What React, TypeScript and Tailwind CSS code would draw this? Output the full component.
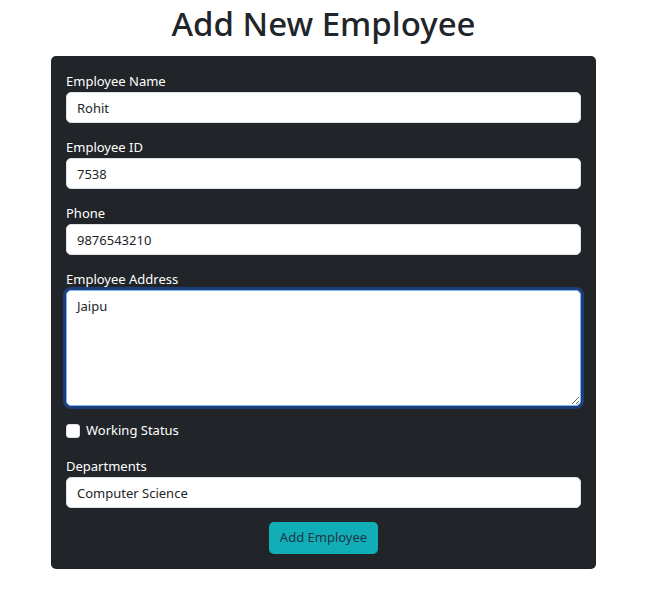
import React, { useState } from 'react';

const font = { fontFamily: '"Noto Sans", "Open Sans", sans-serif' };

const Field: React.FC<{ label: string; value: string; last?: boolean }> = ({ label, value, last }) => (
  <div className={last ? 'mb-[14px]' : 'mb-[14px]'}>
    <label className="block text-[13px] leading-[20px] text-white mb-[1px]">{label}</label>
    <input
      readOnly
      value={value}
      className="w-full h-[31px] rounded-[5px] bg-white px-[10px] text-[13px] text-[#212529] border border-[#dee2e6] outline-none"
    />
  </div>
);

const App: React.FC = () => {
  const [working, setWorking] = useState(false);

  return (
    <div className="min-h-[593px] bg-white flex flex-col items-center pr-[8px]" style={font}>
      <h1 className="text-[33px] leading-[44px] font-medium text-[#212529] mt-[2px] mb-[10px]">Add New Employee</h1>

      <form className="w-[545px] bg-[#212529] rounded-[5px] px-[15px] pt-[15px] pb-[15px]">
        <Field label="Employee Name" value="Rohit" />
        <Field label="Employee ID" value="7538" />
        <Field label="Phone" value="9876543210" />

        <div className="mb-[15px]">
          <label className="block text-[13px] leading-[20px] text-white mb-[1px]">Employee Address</label>
          <textarea
            readOnly
            value="Jaipu"
            className="block w-full h-[116px] rounded-[5px] bg-white px-[10px] py-[6px] text-[13px] text-[#212529] border border-[#86b7fe] outline-none ring-[3px] ring-[#1d3f78] resize-y"
          />
        </div>

        <div className="flex items-center gap-[6px] h-[20px] mb-[15px]">
          <input
            type="checkbox"
            checked={working}
            onChange={() => setWorking(!working)}
            className="appearance-none w-[14px] h-[14px] rounded-[3px] bg-white border border-[#dee2e6]"
          />
          <span className="text-[13px] text-white">Working Status</span>
        </div>

        <Field label="Departments" value="Computer Science" last />

        <div className="flex justify-center">
          <button
            type="button"
            className="h-[32px] px-[11px] rounded-[5px] bg-[#12aeb7] text-[13px] text-[#1b3644]"
          >
            Add Employee
          </button>
        </div>
      </form>
    </div>
  );
};

export default App;
